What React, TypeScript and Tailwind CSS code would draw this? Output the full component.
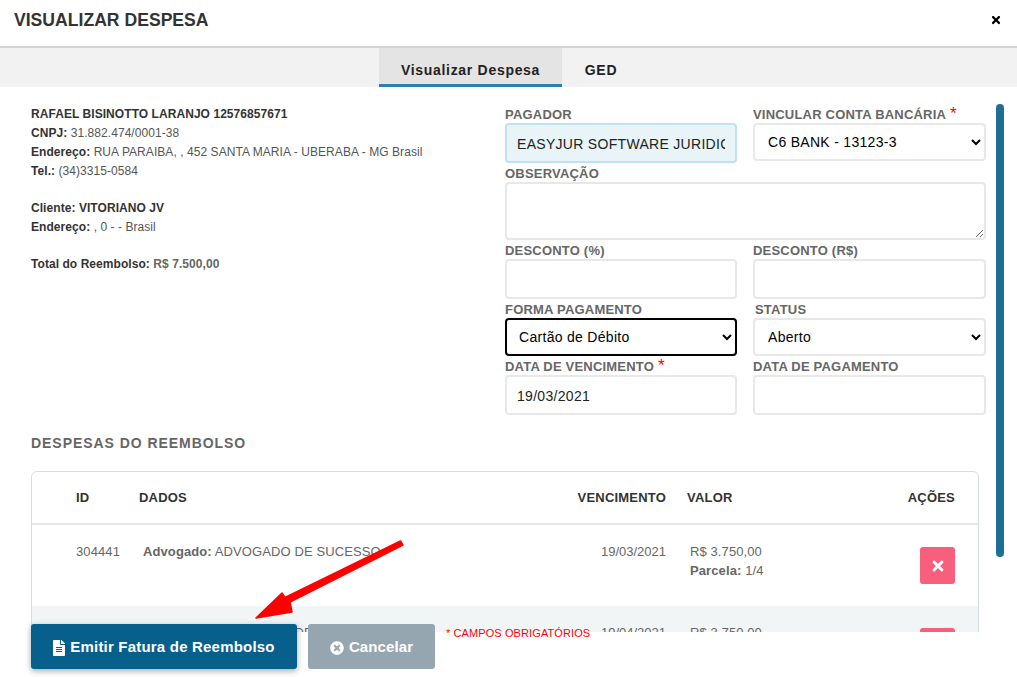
import { FaFileAlt, FaTimes, FaTimesCircle } from 'react-icons/fa'

const labelClass = 'block h-[19px] text-[13px] leading-[22px] font-bold text-[#666] tracking-[0.2px] whitespace-nowrap'
const inputClass = 'block w-full h-[40px] px-[10px] pt-[1px] border-2 border-[#e8e8e8] rounded-[4px] bg-white text-[14px] text-[#222] tracking-[0.3px] outline-none'
const selectClass = 'block w-full h-[38px] pl-[9px] pr-[4px] border-2 border-[#e8e8e8] rounded-[4px] bg-white text-[14px] text-black tracking-[0.3px]'

const rowGrid = 'grid grid-cols-[107px_427px_100px_221px_68px] pr-[23px]'

const despesas = [
  { id: '304441', venc: '19/03/2021', parcela: '1/4', bg: 'bg-white' },
  { id: '304442', venc: '19/04/2021', parcela: '2/4', bg: 'bg-[#f2f5f6]' },
]

function Req() {
  return <span className="text-[#f00] text-[17px] leading-[10px] ml-[4px] font-normal">*</span>
}

export default function App() {
  return (
    <div className="relative w-[1017px] h-[677px] overflow-hidden bg-white font-['Liberation_Sans',Arial,sans-serif]">
      <div className="flex items-start justify-between h-[46px] pl-[14px] pr-[15px] pt-[10px]">
        <h1 className="text-[17.6px] leading-[20px] font-bold text-[#333]">VISUALIZAR DESPESA</h1>
        <FaTimes className="w-[12px] h-[12px] mt-[4px] text-black" />
      </div>
      <div className="h-[2px] bg-[#d5d5d5]" />
      <div className="flex justify-center h-[39px] bg-[#f2f2f2] pl-[2px]">
        <div className="flex items-center justify-center w-[183px] bg-[#e4e4e4] border-b-[3px] border-[#2a80b0] text-[14px] font-bold text-[#222] tracking-[0.7px] pt-[9px]">
          Visualizar Despesa
        </div>
        <div className="flex items-center justify-center w-[78px] pt-[6px] text-[14px] font-bold text-[#222] tracking-[0.7px]">GED</div>
      </div>

      <div className="h-[545px] overflow-hidden pl-[31px] pt-[18px]">
        <div className="flex">
          <div className="w-[474px] shrink-0 text-[12px] leading-[19px] text-[#555] tracking-[0.06px]">
            <p className="font-bold text-[#333]">RAFAEL BISINOTTO LARANJO 12576857671</p>
            <p><b className="text-[#333]">CNPJ:</b> 31.882.474/0001-38</p>
            <p><b className="text-[#333]">Endereço:</b> RUA PARAIBA, , 452 SANTA MARIA - UBERABA - MG Brasil</p>
            <p><b className="text-[#333]">Tel.:</b> (34)3315-0584</p>
            <p className="mt-[18px]"><b className="text-[#333]">Cliente: VITORIANO JV</b></p>
            <p><b className="text-[#333]">Endereço:</b> , 0 - - Brasil</p>
            <p className="mt-[18px]"><b className="text-[#333]">Total do Reembolso:</b> <b className="font-bold text-[#666]">R$ 7.500,00</b></p>
          </div>
          <div className="w-[481px] shrink-0 -mt-[1px] grid grid-cols-[232px_233px] gap-x-[16px]">
            <div>
              <label className={labelClass}>PAGADOR</label>
              <input readOnly defaultValue="EASYJUR SOFTWARE JURIDICO" className={inputClass + ' !bg-[#e8f4f7] !border-[#bfe3ee]'} />
            </div>
            <div>
              <label className={labelClass}>VINCULAR CONTA BANCÁRIA<Req /></label>
              <select defaultValue="c6" className={selectClass}>
                <option value="c6">C6 BANK - 13123-3</option>
              </select>
            </div>
            <div className="col-span-2">
              <label className={labelClass}>OBSERVAÇÃO</label>
              <textarea className="block w-full h-[58px] border-2 border-[#e8e8e8] rounded-[4px] bg-white outline-none" />
            </div>
            <div>
              <label className={labelClass}>DESCONTO (%)</label>
              <input className={inputClass} />
            </div>
            <div>
              <label className={labelClass}>DESCONTO (R$)</label>
              <input className={inputClass} />
            </div>
            <div>
              <label className={labelClass}>FORMA PAGAMENTO</label>
              <select defaultValue="debito" className={selectClass + ' !border-black !pl-[8px]'}>
                <option value="debito">Cartão de Débito</option>
              </select>
            </div>
            <div>
              <label className={labelClass + ' pl-[2px]'}>STATUS</label>
              <select defaultValue="aberto" className={selectClass}>
                <option value="aberto">Aberto</option>
              </select>
            </div>
            <div>
              <label className={labelClass}>DATA DE VENCIMENTO<Req /></label>
              <input readOnly defaultValue="19/03/2021" className={inputClass} />
            </div>
            <div>
              <label className={labelClass}>DATA DE PAGAMENTO</label>
              <input className={inputClass} />
            </div>
          </div>
        </div>

        <h2 className="mt-[19px] text-[14px] leading-[18px] font-bold text-[#666] tracking-[0.95px]">DESPESAS DO REEMBOLSO</h2>

        <div className="mt-[19px] w-[948px] border border-[#d5dce2] rounded-[6px] overflow-hidden">
          <div className={rowGrid + ' h-[53px] items-center border-b-2 border-[#e4e8ea] text-[13px] font-bold text-[#333] tracking-[0.2px]'}>
            <div className="pl-[44px]">ID</div>
            <div>DADOS</div>
            <div className="text-right">VENCIMENTO</div>
            <div className="pl-[21px]">VALOR</div>
            <div className="text-right">AÇÕES</div>
          </div>
          {despesas.map(d => (
            <div key={d.id} className={rowGrid + ' h-[81px] pt-[17px] text-[13px] leading-[19px] text-[#666] tracking-[0.1px] ' + d.bg}>
              <div className="pl-[44px]">{d.id}</div>
              <div className="pl-[4px]"><b>Advogado:</b> ADVOGADO DE SUCESSO</div>
              <div className="text-right tracking-[0px]">{d.venc}</div>
              <div className="pl-[24px]">
                <p>R$ 3.750,00</p>
                <p><b>Parcela:</b> {d.parcela}</p>
              </div>
              <div className="flex justify-end pt-[5px]">
                <button className="flex items-center justify-center w-[35px] h-[37px] rounded-[3px] bg-[#f85f7c] text-white">
                  <FaTimes className="w-[16px] h-[16px]" />
                </button>
              </div>
            </div>
          ))}
        </div>
      </div>

      {/* barra de rolagem sobre o conteudo */}
      <div className="absolute left-[996px] top-[104px] w-[8px] h-[453px] rounded-[4px] bg-[#1f6e95]" />

      {/* rodape fixo */}
      <div className="absolute left-0 right-0 top-[632px] h-[45px] bg-white flex items-start pl-[31px]">
        <button className="-mt-[8px] pt-[2px] flex items-center justify-center w-[266px] h-[45px] rounded-[3px] bg-[#07608c] text-white text-[15px] font-bold tracking-[0.2px] shadow-[0_2px_6px_rgba(0,0,0,0.35)]">
          <FaFileAlt className="w-[12px] h-[16px] mr-[5px]" />Emitir Fatura de Reembolso
        </button>
        <button className="-mt-[8px] pt-[2px] ml-[11px] flex items-center justify-center w-[127px] h-[45px] rounded-[3px] bg-[#96a6b0] text-white text-[15px] font-bold tracking-[0.1px]">
          <FaTimesCircle className="w-[14px] h-[14px] mr-[5px]" />Cancelar
        </button>
        <span className="-mt-[5px] ml-[11px] text-[11px] leading-[13px] text-[#f00] tracking-[0.1px] whitespace-nowrap">* CAMPOS OBRIGATÓRIOS</span>
      </div>

      {/* seta vermelha */}
      <svg className="absolute left-[240px] top-[530px] w-[180px] h-[100px]" viewBox="240 530 180 100">
        <path d="M400.5 541 L403 545 L290 602 L292 612 L256 618 L282 593 L285 597.5 Z" fill="#f00" stroke="#f00" strokeWidth="1.5" strokeLinejoin="round" />
      </svg>
    </div>
  )
}
